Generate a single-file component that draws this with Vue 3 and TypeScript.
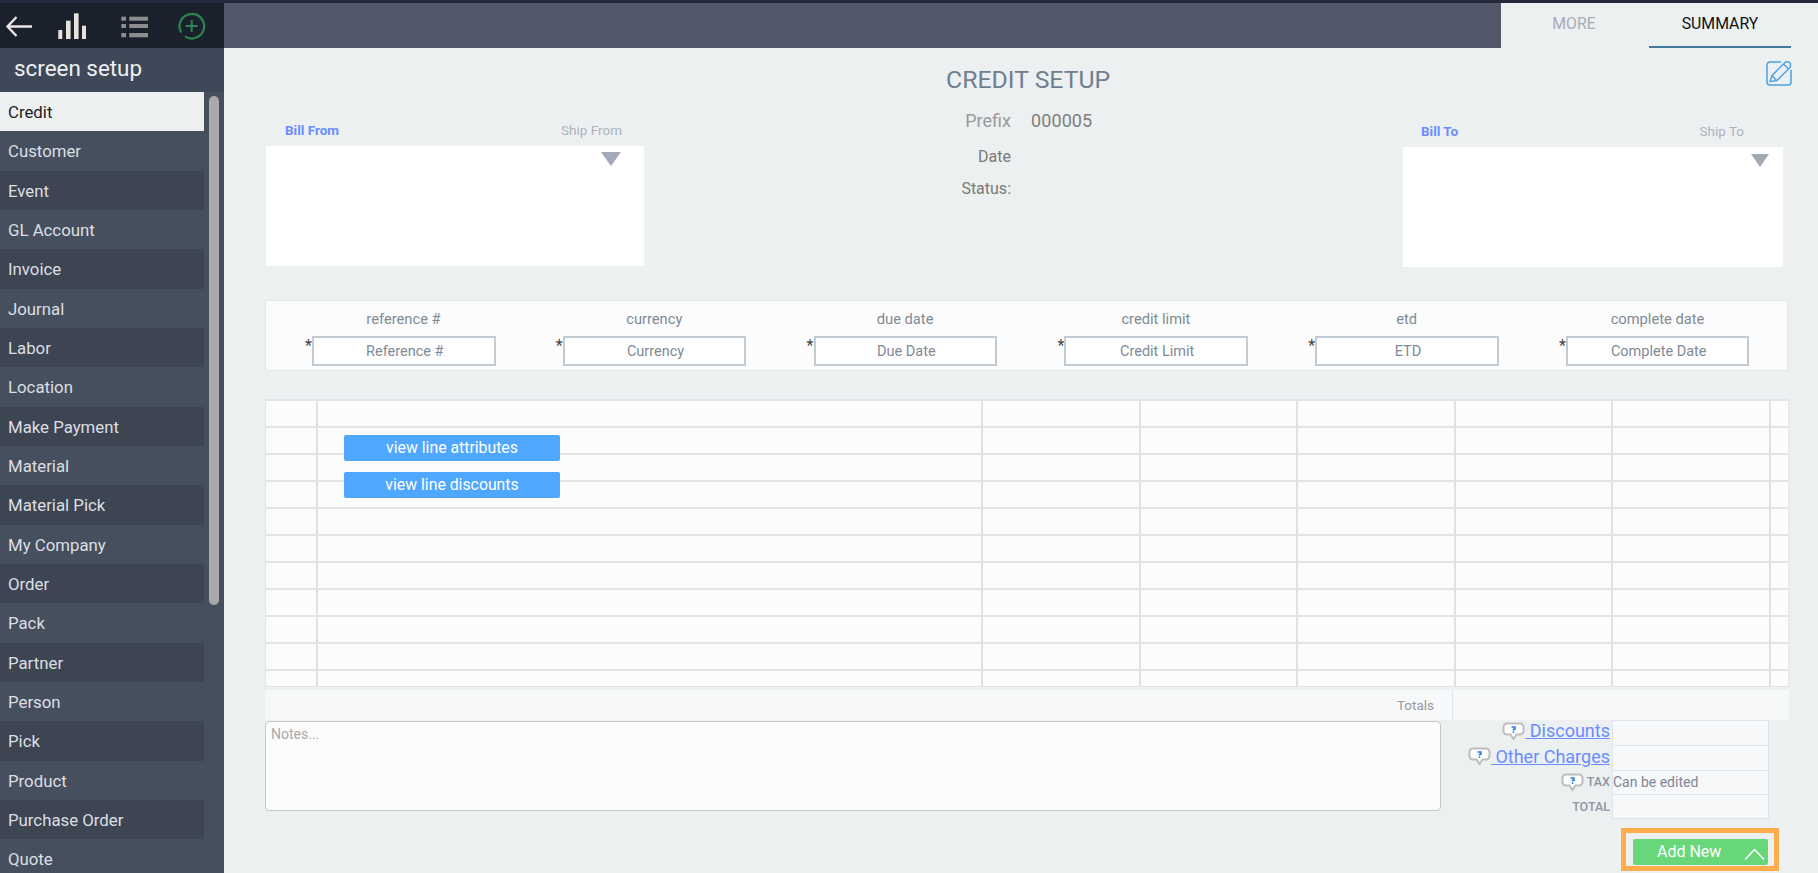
<script setup lang="ts">
const menu = ['Credit','Customer','Event','GL Account','Invoice','Journal','Labor','Location','Make Payment','Material','Material Pick','My Company','Order','Pack','Partner','Person','Pick','Product','Purchase Order','Quote']
const fields = [
  { label: 'reference #', ph: 'Reference #' },
  { label: 'currency', ph: 'Currency' },
  { label: 'due date', ph: 'Due Date' },
  { label: 'credit limit', ph: 'Credit Limit' },
  { label: 'etd', ph: 'ETD' },
  { label: 'complete date', ph: 'Complete Date' },
]
const rows = 11
const cols = 8
const totals = [
  { label: 'Discounts', kind: 'link', help: true, value: '' },
  { label: 'Other Charges', kind: 'link', help: true, value: '' },
  { label: 'TAX', kind: 'small', help: true, value: 'Can be edited' },
  { label: 'TOTAL', kind: 'small', help: false, value: '' },
]
</script>

<template>
  <div class="page">
    <aside class="side">
      <div class="side-top">
        <svg class="i-back" width="30" height="30" viewBox="0 0 30 30"><path d="M28 15.500H4M12.500 6L3.500 15.500l9 9.500" fill="none" stroke="#e9e6e2" stroke-width="2.400"/></svg>
        <svg class="i-bars" width="34" height="30" viewBox="0 0 34 30"><g fill="#e6e2dc"><rect x="4.300" y="19" width="4" height="9"/><rect x="12" y="9.700" width="4.600" height="18.300"/><rect x="20" y="2.300" width="4.600" height="25.700"/><rect x="28" y="14.700" width="4" height="13.300"/></g></svg>
        <svg class="i-list" width="30" height="30" viewBox="0 0 30 30"><g fill="#8d8d8d"><rect x="2.300" y="5.700" width="4.700" height="4"/><rect x="10.300" y="5.700" width="18.700" height="4"/><rect x="2.300" y="13" width="4.700" height="4"/><rect x="10.300" y="13" width="18.700" height="4"/><rect x="2.300" y="22" width="4.700" height="4.300"/><rect x="10.300" y="22" width="18.700" height="4.300"/></g></svg>
        <svg class="i-plus" width="30" height="30" viewBox="0 0 30 30"><path d="M4.300 21.500A12.300 12.300 0 1 1 8 25.400" fill="none" stroke="#2b8550" stroke-width="2.200"/><path d="M14.700 9v12M8.700 15h12" stroke="#2b8550" stroke-width="2"/></svg>
      </div>
      <div class="side-title">screen setup</div>
      <div class="side-body">
        <ul class="menu">
          <li v-for="(m, i) in menu" :key="m" :class="{ on: i === 0, odd: i % 2 === 0 }">{{ m }}</li>
        </ul>
        <div class="scroll"></div>
      </div>
    </aside>

    <main class="main">
      <header class="bar">
        <div class="bar-fill"></div>
        <nav class="tabs">
          <span class="tab more">MORE</span>
          <span class="tab summary">SUMMARY</span>
        </nav>
      </header>

      <section class="head">
        <div class="party from">
          <div class="party-labels"><b>Bill From</b><span>Ship From</span></div>
          <div class="party-box"><i class="tri"></i></div>
        </div>
        <div class="middle">
          <h1>CREDIT SETUP</h1>
          <div class="meta prefix"><label>Prefix</label><span>000005</span></div>
          <div class="meta date"><label>Date</label></div>
          <div class="meta status"><label>Status:</label></div>
        </div>
        <div class="party to">
          <svg class="edit" width="26" height="26" viewBox="0 0 26 26">
            <path d="M15 2H4a3 3 0 0 0-3 3v17a3 3 0 0 0 3 3h18a3 3 0 0 0 3-3V10" fill="none" stroke="#4aa3e6" stroke-width="1.500"/>
            <path d="M4 21.500l2-6L19.500 2l3.500 0 1.500 1.500V7L11 20.500zM6 15.500l4.500 5M17.500 4l4.500 4.500" fill="none" stroke="#4aa3e6" stroke-width="1.400"/>
          </svg>
          <div class="party-labels"><b>Bill To</b><span>Ship To</span></div>
          <div class="party-box"><i class="tri"></i></div>
        </div>
      </section>

      <section class="fields">
        <div v-for="f in fields" :key="f.label" class="field">
          <div class="field-label">{{ f.label }}</div>
          <div class="field-row"><em>*</em><div class="input">{{ f.ph }}</div></div>
        </div>
      </section>

      <section class="grid">
        <div v-for="r in rows" :key="r" class="grow" :class="{ last: r === rows }">
          <div v-for="c in cols" :key="c" class="gcell"></div>
        </div>
        <button class="line-btn b1">view line attributes</button>
        <button class="line-btn b2">view line discounts</button>
      </section>

      <section class="totals-bar">
        <div class="tb-label">Totals</div>
        <div class="tb-rest"></div>
      </section>

      <section class="bottom">
        <div class="notes">Notes...</div>
        <div class="totals">
          <div v-for="t in totals" :key="t.label" class="t-row" :class="t.kind">
            <div class="t-label">
              <svg v-if="t.help" class="help" width="23" height="20" viewBox="0 0 23 20">
                <path d="M5 1.500h13a3.500 3.500 0 0 1 3.500 3.500v4a3.500 3.500 0 0 1-3.500 3.500h-3.500L11.500 17l-3-4.500H5A3.500 3.500 0 0 1 1.500 9V5A3.500 3.500 0 0 1 5 1.500z" fill="#fff" stroke="#bdbdbd" stroke-width="2"/>
                <path d="M9.500 5h3.500v2.200h-1.500V8.500" fill="none" stroke="#2b7de0" stroke-width="1.500"/>
                <rect x="10.700" y="9.300" width="1.600" height="1.600" fill="#2b7de0"/>
              </svg>
              <a v-if="t.kind === 'link'">{{ ' ' + t.label }}</a>
              <span v-else>{{ t.label }}</span>
            </div>
            <div class="t-value">{{ t.value }}</div>
          </div>
        </div>
      </section>

      <div class="actions">
        <div class="focus">
          <button class="add">
            <span>Add New</span>
            <svg width="21" height="12" viewBox="0 0 21 12"><path d="M1 11.500L10.500 1.500 20 11.500" fill="none" stroke="#fff" stroke-width="1.500"/></svg>
          </button>
        </div>
      </div>
    </main>
  </div>
</template>

<style>
html, body { margin: 0; padding: 0; overflow: hidden; }
</style>

<style scoped>
.page {
  width: 1818px; height: 873px; display: flex; overflow: hidden;
  border-top: 3px solid #23293a; box-sizing: border-box;
  font-family: Roboto, "Liberation Sans", sans-serif; background: #ecf0f1;
}
.side { width: 224px; flex: none; background: #464f5e; display: flex; flex-direction: column; }
.side-top { height: 45px; box-sizing: border-box; background: #1a212d; flex: none; display: flex; align-items: flex-start; padding: 8px 0 0 4px; }
.i-bars { margin-left: 20px; }
.i-list { margin-left: 31px; }
.i-plus { margin-left: 28px; }
.side-title { height: 44px; flex: none; padding-left: 14px; color: #eef1f3; font-size: 22.400px; line-height: 40px; background: #3f4858; }
.side-body { flex: 1; display: flex; overflow: hidden; position: relative; }
.menu { list-style: none; margin: 0; padding: 0; width: 204px; }
.menu li { height: 39.330px; line-height: 41px; padding-left: 8px; font-size: 16.800px; color: #dcdfe2; background: #464f5e; box-sizing: border-box; overflow: hidden; }
.menu li.odd { background: #3d4553; }
.menu li.on { background: #ecf0f1; color: #222; }
.scroll { position: absolute; left: 209px; top: 4px; width: 10px; height: 509px; border-radius: 5px; background: #a9a9a9; }

.main { flex: 1; min-width: 0; }
.bar { height: 45px; display: flex; }
.bar-fill { flex: 1; background: #525869; }
.tabs { width: 317px; display: flex; }
.tab { font-size: 15.800px; line-height: 42px; text-align: center; }
.more { width: 148px; color: #a7acb8; padding-right: 2px; box-sizing: border-box; }
.summary { width: 142px; color: #111; height: 45px; box-sizing: border-box; border-bottom: 2px solid #44799c; }

.head { display: flex; position: relative; height: 252px; padding-left: 42px; }
.party { position: relative; }
.party.from { width: 378px; }
.party.to { width: 380px; margin-left: auto; margin-right: 35px; }
.party-labels { height: 32px; margin-top: 66px; display: flex; justify-content: space-between; align-items: center; padding: 0 22px 0 19px; font-size: 13.500px; line-height: 32px; }
.party-labels b { color: #6a8cff; font-weight: 700; }
.party-labels span { color: #adb2bf; }
.party-box { height: 120px; background: #fff; position: relative; }
.tri { position: absolute; right: 23px; top: 6px; width: 0; height: 0; border-left: 10px solid transparent; border-right: 10px solid transparent; border-top: 14px solid #a4a9b9; }
.to .party-labels { margin-top: 67px; padding: 0 39px 0 18px; }
.to .tri { right: 14px; top: 7px; border-left-width: 9px; border-right-width: 9px; border-top-width: 13px; }
.edit { position: absolute; right: -9px; top: 12px; }
.middle { position: absolute; left: 0; right: 0; top: 0; pointer-events: none; }
.middle h1 { position: absolute; left: 722px; top: 16px; margin: 0; font-size: 24.800px; line-height: 32px; font-weight: 400; color: #6f7f8f; white-space: nowrap; }
.meta { position: absolute; left: 687px; display: flex; }
.meta label { width: 100px; text-align: right; color: #7a7a7a; font-size: 16px; line-height: 20px; }
.meta span { margin-left: 20px; color: #7e7e7e; font-size: 18px; line-height: 20px; letter-spacing: .1px; }
.prefix { top: 63px; }
.prefix label { font-size: 18px; color: #9a9a9a; }
.date { top: 99px; }
.status { top: 131px; }

.fields {
  margin-left: 41px; width: 1523px; height: 71px; box-sizing: border-box; background: #fcfcfc;
  border: 1px solid #e2e6ea; border-radius: 2px; display: grid;
  grid-template-columns: repeat(6, 250.800px); padding-left: 39px;
}
.field-label { width: 183px; margin-left: 7px; text-align: center; font-size: 14.700px; line-height: 20px; color: #7f8a96; padding-top: 8px; }
.field-row { display: flex; margin-top: 7px; }
.field-row em { width: 7px; font-style: normal; font-size: 16px; color: #444; line-height: 20px; }
.input { width: 183.500px; height: 30px; box-sizing: border-box; border: 2px solid #c0cbd3; background: #fff; text-align: center; font-size: 14.500px; line-height: 27px; color: #7f8a96; padding-left: 2px; }

.grid { position: relative; margin-left: 41px; margin-top: 28px; width: 1524px; height: 288px; box-sizing: border-box; background: #fcfcfc; border: 1px solid #e1e5e8; border-top-width: 2px; overflow: hidden; }
.grow { display: grid; grid-template-columns: 52px 665px repeat(5, 157.600px) 1fr; height: 27px; box-sizing: border-box; border-bottom: 2px solid #e1e5e8; }
.grow.last { height: 16px; border-bottom: 0; }
.gcell { border-right: 2px solid #dfe2e5; }
.gcell:last-child { border-right: 0; }
.line-btn { position: absolute; left: 78px; width: 216px; height: 26px; padding: 0; border: 0; border-radius: 2px; background: #4fa7ff; color: #fff; font: 400 15.800px/26px Roboto, sans-serif; }
.b1 { top: 34px; }
.b2 { top: 71px; }

.totals-bar { margin-left: 41px; margin-top: 3px; width: 1524px; height: 30px; display: flex; background: #f7f8fa; }
.tb-label { width: 1169px; text-align: right; font-size: 13.500px; line-height: 30px; color: #9a9a9a; }
.tb-rest { margin-left: 18px; flex: 1; border-left: 1px solid #e1e5e8; }

.bottom { display: flex; margin-left: 41px; width: 1505px; height: 101px; }
.notes { width: 1176px; height: 90px; margin-top: 1px; box-sizing: border-box; border: 1px solid #c8c8c8; border-radius: 4px; background: #fcfcfc; padding: 3px 5px; font-size: 14px; line-height: 18px; color: #a9a9a9; }
.totals { flex: 1; }
.t-row { display: flex; height: 24.750px; }
.t-label { width: 170px; margin-right: 2px; display: flex; justify-content: flex-end; align-items: center; white-space: nowrap; margin-left: -1px; }
.t-label a { color: #6a8cff; font-size: 18px; line-height: 22px; text-decoration: underline; white-space: pre; }
.t-row:first-child .t-label a { margin-top: -2px; }
.t-label span { color: #8e95a3; font-size: 12.500px; font-weight: 500; padding-left: 3px; }
.t-row.small .help { margin-top: 3px; }
.help { flex: none; }
.t-value { width: 157px; box-sizing: border-box; border: 1px solid #e0e3ea; border-bottom-width: 0; background: #f7f8fa; font-size: 14px; line-height: 23px; color: #808792; }
.t-row:last-child .t-value { border-bottom-width: 1px; }
.actions { margin-left: 397px; display: flex; justify-content: flex-end; width: 1158px; margin-top: 7px; }
.focus { width: 158px; height: 43px; box-sizing: border-box; border: 5px solid #ffac4d; padding: 6px 0 6px 7px; }
.add { width: 135px; height: 26px; padding: 0; border: 0; border-radius: 2px; background: #68d77a; color: #fff; font: 400 16px/26px Roboto, sans-serif; position: relative; display: block; }
.add span { position: absolute; left: 24px; top: 0; }
.add svg { position: absolute; right: 3px; top: 9px; }
</style>
